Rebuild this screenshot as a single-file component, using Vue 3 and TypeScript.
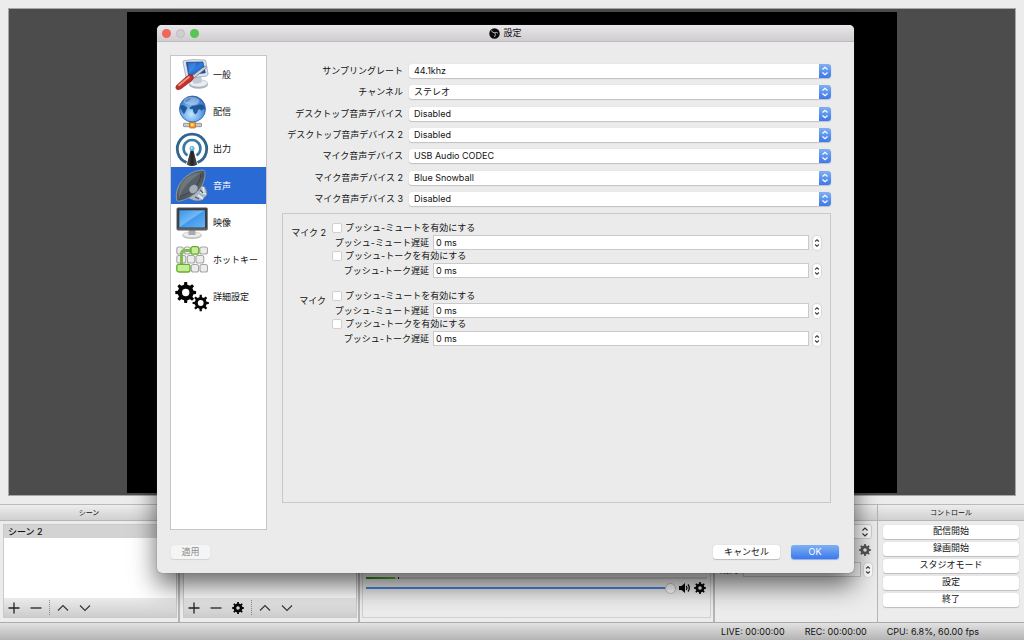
<script setup lang="ts">
import { ref } from 'vue'

function gear(cx: number, cy: number, outer: number, inner: number, hole: number): string {
  const teeth = 8
  const step = (Math.PI * 2) / teeth
  const at = (r: number, a: number) =>
    `${(cx + r * Math.cos(a)).toFixed(2)} ${(cy + r * Math.sin(a)).toFixed(2)}`
  const points: string[] = []
  for (let i = 0; i < teeth; i++) {
    const a = i * step
    points.push(
      at(inner, a - step * 0.27),
      at(outer, a - step * 0.17),
      at(outer, a + step * 0.17),
      at(inner, a + step * 0.27),
    )
  }
  return `M${points.join('L')}Z M${cx - hole} ${cy}a${hole} ${hole} 0 1 0 ${hole * 2} 0a${hole} ${hole} 0 1 0 ${-hole * 2} 0Z`
}

const smallGear = gear(6, 6, 6, 4.5, 1.8)

const sections = [
  { id: 'general', label: '一般' },
  { id: 'stream', label: '配信' },
  { id: 'output', label: '出力' },
  { id: 'audio', label: '音声' },
  { id: 'video', label: '映像' },
  { id: 'hotkeys', label: 'ホットキー' },
  { id: 'advanced', label: '詳細設定' },
]
const active = ref('audio')

const devices = [
  { id: 'rate', label: 'サンプリングレート', value: '44.1khz' },
  { id: 'channels', label: 'チャンネル', value: 'ステレオ' },
  { id: 'desktop1', label: 'デスクトップ音声デバイス', value: 'Disabled' },
  { id: 'desktop2', label: 'デスクトップ音声デバイス 2', value: 'Disabled' },
  { id: 'mic1', label: 'マイク音声デバイス', value: 'USB Audio CODEC' },
  { id: 'mic2', label: 'マイク音声デバイス 2', value: 'Blue Snowball' },
  { id: 'mic3', label: 'マイク音声デバイス 3', value: 'Disabled' },
]

const mics = ref([
  { id: 'm2', name: 'マイク 2', mute: false, muteDelay: '0 ms', talk: false, talkDelay: '0 ms' },
  { id: 'm1', name: 'マイク', mute: false, muteDelay: '0 ms', talk: false, talkDelay: '0 ms' },
])

const controls = ['配信開始', '録画開始', 'スタジオモード', '設定', '終了']
const volume = ref(100)
</script>

<template>
  <div class="app">
    <main class="preview"><div class="canvas"></div></main>

    <div class="docks">
      <section class="dock">
        <h2>シーン</h2>
        <div class="list">
          <div class="scene">シーン 2</div>
          <div class="tools">
            <button aria-label="追加"><svg viewBox="0 0 12 12"><path d="M6 .5v11M.5 6h11" /></svg></button>
            <button aria-label="削除"><svg viewBox="0 0 12 12"><path d="M.5 6h11" /></svg></button>
            <i class="split"></i>
            <button aria-label="上へ"><svg viewBox="0 0 12 12"><path class="thin" d="M1 8.5l5-5 5 5" /></svg></button>
            <button aria-label="下へ"><svg viewBox="0 0 12 12"><path class="thin" d="M1 3.5l5 5 5-5" /></svg></button>
          </div>
        </div>
      </section>

      <section class="dock">
        <h2></h2>
        <div class="list">
          <div class="tools">
            <button aria-label="追加"><svg viewBox="0 0 12 12"><path d="M6 .5v11M.5 6h11" /></svg></button>
            <button aria-label="削除"><svg viewBox="0 0 12 12"><path d="M.5 6h11" /></svg></button>
            <button aria-label="設定"><svg viewBox="0 0 12 12"><path class="solid" :d="smallGear" /></svg></button>
            <i class="split"></i>
            <button aria-label="上へ"><svg viewBox="0 0 12 12"><path class="thin" d="M1 8.5l5-5 5 5" /></svg></button>
            <button aria-label="下へ"><svg viewBox="0 0 12 12"><path class="thin" d="M1 3.5l5 5 5-5" /></svg></button>
          </div>
        </div>
      </section>

      <section class="dock">
        <h2></h2>
        <div class="mixer">
          <div class="meter"><i class="level"></i><i class="peak"></i></div>
          <div class="volume">
            <input v-model="volume" type="range" min="0" max="100" aria-label="音量" />
            <button aria-label="ミュート">
              <svg viewBox="0 0 12 12">
                <path class="solid" d="M0 4h2.5L6 1v10L2.500 8H0z" />
                <path class="wave" d="M7.300 4q1.400 2 0 4M9 2.500q2.600 3.500 0 7" />
              </svg>
            </button>
            <button aria-label="音声設定"><svg viewBox="0 0 12 12"><path class="solid" :d="smallGear" /></svg></button>
          </div>
        </div>
      </section>

      <section class="dock">
        <h2></h2>
        <div class="transition">
          <button class="combo" aria-label="切り替え">
            <svg viewBox="0 0 8 12"><path d="M1.500 4.500L4 2l2.500 2.500M1.500 7.500L4 10l2.500-2.500" /></svg>
          </button>
          <button class="config" aria-label="切り替え設定"><svg viewBox="0 0 12 12"><path class="solid" :d="smallGear" /></svg></button>
          <div class="duration">
            <label for="duration">期間</label>
            <input id="duration" type="text" />
            <button class="spin" aria-label="期間の増減">
              <svg viewBox="0 0 8 14"><path d="M2.200 5.500L4 3.700l1.800 1.800M2.200 8.500L4 10.300l1.800-1.800" /></svg>
            </button>
          </div>
        </div>
      </section>

      <section class="dock">
        <h2>コントロール</h2>
        <div class="controls">
          <button v-for="c in controls" :key="c" class="push">{{ c }}</button>
        </div>
      </section>
    </div>

    <footer class="status">
      <span>LIVE: 00:00:00</span>
      <span>REC: 00:00:00</span>
      <span>CPU: 6.8%, 60.00 fps</span>
    </footer>

    <div class="dialog" role="dialog" aria-labelledby="dialog-title">
      <header class="titlebar">
        <div class="lights">
          <button class="close" aria-label="閉じる"></button>
          <button class="mini" aria-label="しまう"></button>
          <button class="full" aria-label="拡大"></button>
        </div>
        <svg class="logo" viewBox="0 0 12 12">
          <circle cx="6" cy="6" r="5.700" fill="#0c0c0c" />
          <path d="M2.800 2.600Q3.200 5.200 6 5.200Q8.200 4.200 9.800 5.600M6.300 5.200Q7.800 7.200 6 9.800" fill="none" stroke="#d5d5d5" stroke-width=".9" />
        </svg>
        <h1 id="dialog-title">設定</h1>
      </header>

      <div class="body">
        <nav class="sidebar">
          <button
            v-for="s in sections"
            :key="s.id"
            :class="{ active: active === s.id }"
            @click="active = s.id"
          >
            <svg v-if="s.id === 'general'" viewBox="0 0 34 34">
              <defs>
                <linearGradient id="crt" x1="0" y1="0" x2="1" y2="1">
                  <stop offset="0" stop-color="#0b3fa5" /><stop offset=".5" stop-color="#2f7de0" /><stop offset="1" stop-color="#0c3c9c" />
                </linearGradient>
              </defs>
              <ellipse cx="23.500" cy="26.500" rx="9.500" ry="4.300" fill="#aab3bf" />
              <ellipse cx="23.500" cy="25.300" rx="9" ry="3.800" fill="#e9edf3" stroke="#9ba6b5" stroke-width=".5" />
              <path d="M17 19l9-2 1 7q-5 3-9 1z" fill="#c3cad6" />
              <path d="M9 2.500Q18 1 29.500 2q1 0 1.300 1L33 16q0 1.500-1.500 2L12.500 20.500q-1.200 0-1.500-1L8 4q0-1.300 1-1.500z" fill="#dfe4ec" stroke="#8e9bb0" stroke-width=".7" />
              <path d="M11.300 4.300L28 3.900 30.300 14.800 13.500 17z" fill="url(#crt)" stroke="#14376f" stroke-width=".6" />
              <path d="M12.500 5l9-.3Q20 11 14.500 14z" fill="#6aa7f0" opacity=".4" />
              <path d="M16.500 18.500L26 11l4.500-3 1.200 1.400-4 3.600L18.500 20.500z" fill="#ccd3dc" stroke="#66707e" stroke-width=".7" />
              <path d="M1.500 27.500L11.500 18.500q3-2.800 6-1.300 2.200 2.500-.5 5.200L6 30.800q-3 1.700-4.800 0-.8-1.500.3-3.300z" fill="#c4302b" stroke="#7c1714" stroke-width=".6" />
              <path d="M4 27.300L14 19" stroke="#f29488" stroke-width="1.800" stroke-linecap="round" />
            </svg>
            <svg v-else-if="s.id === 'stream'" viewBox="0 0 34 34">
              <defs>
                <radialGradient id="sea" cx=".45" cy=".7" r=".75">
                  <stop offset="0" stop-color="#c5e6ff" /><stop offset=".5" stop-color="#65a7e8" /><stop offset="1" stop-color="#2461b6" />
                </radialGradient>
              </defs>
              <path d="M17.500 26v4" stroke="#8c8c8c" stroke-width="3" />
              <rect x="8.500" y="28.300" width="18" height="3.400" rx=".6" fill="#c8c8c8" stroke="#777" stroke-width=".7" />
              <rect x="14.500" y="27" width="6" height="6" rx="1" fill="#f39b2d" stroke="#b8640c" stroke-width=".7" />
              <rect x="16" y="28.500" width="2.500" height="2.500" fill="#ffdc98" />
              <g transform="translate(.5 0)">
                <circle cx="17" cy="14" r="13" fill="url(#sea)" stroke="#2860ae" stroke-width=".8" />
                <path d="M4.700 11q2-1.500 3.800-.6 2.500 1 3.500 2.600-1 1-1.500 2.500-.8 2.200-2 3.500-1.300-.8-1.700-2.500Q6 14 4.600 13.500zM14 12.500l3-1.700 4-.5 3.500-1 3.400.7q1.800 2.500 1.500 4.500l-2-.5-1.200 2-1.800-2-2 1-.5 2.500-2.300 2-1.800-2.500-.4-2.700-3-.4zM9 5.500l4-2.500 3 .5-2 2-3.500 2z" fill="#194e91" opacity=".9" />
                <ellipse cx="16" cy="6" rx="8" ry="4" fill="#fff" opacity=".35" />
              </g>
            </svg>
            <svg v-else-if="s.id === 'output'" viewBox="0 0 34 34">
              <defs>
                <linearGradient id="cone" x1="0" y1="0" x2="1" y2="0">
                  <stop offset="0" stop-color="#606060" /><stop offset=".5" stop-color="#222" /><stop offset="1" stop-color="#555" />
                </linearGradient>
              </defs>
              <path d="M11.500 30.500A14.700 14.700 0 1 1 22.500 30.500" fill="none" stroke="#2f6590" stroke-width="2.800" />
              <path d="M12.500 23.500A8.400 8.400 0 1 1 21.500 23.500" fill="none" stroke="#3c789f" stroke-width="2.600" />
              <path d="M16 17h2l4.300 15.500q-5.300 3-10.600 0z" fill="url(#cone)" />
              <circle cx="17" cy="16.500" r="2.500" fill="#52b8ec" />
              <circle cx="16.700" cy="16" r="1" fill="#b9ebff" />
            </svg>
            <svg v-else-if="s.id === 'audio'" viewBox="0 0 34 34">
              <defs>
                <linearGradient id="horn" x1="0" y1="0" x2="1" y2="1">
                  <stop offset="0" stop-color="#7b848b" /><stop offset=".55" stop-color="#4a5258" /><stop offset="1" stop-color="#858d93" />
                </linearGradient>
              </defs>
              <path d="M22 15l8 3q2.500 4 2 8l-5 5q-4 1.500-8 .5l-5-2z" fill="#a9b8c4" stroke="#667685" stroke-width=".6" />
              <path d="M25 23l6 2M23 26l5 4M28 18l1 5" stroke="#e6edf3" stroke-width="1.700" />
              <path d="M25 21l3 3M20 28l4 2" stroke="#4d5b68" stroke-width="1.200" />
              <path d="M1.500 31Q0 21 6.500 12 15 2 27 1q2.800.1 3 2Q30.500 13 24 21 16 30 4 32.200 2 32.500 1.500 31z" fill="url(#horn)" stroke="#98a4ad" stroke-width=".8" />
              <path d="M3.500 29Q3.500 20 10.500 12q7-8 16.500-9.300Q26 13 20 19.500 13 27 3.500 29z" fill="#565f66" />
              <path d="M4 28.500Q8 16 26.500 3.300 13 5 7.500 14 3.500 21 4 28.500z" fill="#7d878e" opacity=".6" />
              <path d="M26 4.500q-1 9.500-7 15-6 6-14 8" fill="none" stroke="#394147" stroke-width="1" />
              <ellipse cx="18.500" cy="20" rx="4.600" ry="3.800" fill="#a3adb5" transform="rotate(-45 18.500 20)" />
            </svg>
            <svg v-else-if="s.id === 'video'" viewBox="0 0 34 34">
              <defs>
                <linearGradient id="lcd" x1="0" y1="0" x2="1" y2="1">
                  <stop offset="0" stop-color="#3b93e8" /><stop offset=".48" stop-color="#71b9f5" /><stop offset=".5" stop-color="#4298ec" /><stop offset="1" stop-color="#66b2f3" />
                </linearGradient>
              </defs>
              <ellipse cx="17" cy="29.500" rx="9.800" ry="3.500" fill="#bcbcbc" />
              <ellipse cx="17" cy="28.700" rx="9.300" ry="3" fill="#ececec" stroke="#bbb" stroke-width=".5" />
              <path d="M14 24h6l.8 5h-7.600z" fill="#aaa" />
              <rect x="1.800" y="1.800" width="30.700" height="22.400" rx="1.200" fill="#3a3c40" stroke="#777" stroke-width=".6" />
              <rect x="4.300" y="4.300" width="25.700" height="17.200" fill="url(#lcd)" />
              <path d="M2.300 23h29.700" stroke="#888" stroke-width=".8" />
            </svg>
            <svg v-else-if="s.id === 'hotkeys'" viewBox="0 0 34 34">
              <g fill="#ececec" stroke="#a5a5a5" stroke-width="1.100">
                <rect x="1.800" y="4" width="6.500" height="7" rx="2" /><rect x="9.300" y="4" width="6" height="7" rx="2" />
                <rect x="24.800" y="4" width="7.700" height="7" rx="2" /><rect x="1.800" y="12.500" width="9" height="7.500" rx="2" />
                <rect x="12.300" y="12.500" width="7.500" height="7.500" rx="2" /><rect x="21" y="12.500" width="7.800" height="7.500" rx="2" />
                <rect x="16.300" y="21.500" width="7.300" height="7.500" rx="2" /><rect x="25" y="21.500" width="7.500" height="7.500" rx="2" />
              </g>
              <path d="M16 7.500H10Q6.500 7.500 6.500 11v11" fill="none" stroke="#84bb52" stroke-width="3" />
              <g fill="#c7ec97" stroke="#65ad2d" stroke-width="1.300">
                <rect x="16" y="3.700" width="7.800" height="7.500" rx="2" /><rect x="1.800" y="21.300" width="13.200" height="7.700" rx="2" />
              </g>
            </svg>
            <svg v-else viewBox="0 0 34 34">
              <path :d="gear(10.7, 12.5, 10.5, 8, 3.7)" fill="#050505" fill-rule="evenodd" />
              <path :d="gear(25.7, 23, 8.2, 6, 2.900)" fill="#050505" fill-rule="evenodd" />
            </svg>
            <span>{{ s.label }}</span>
          </button>
        </nav>

        <div class="content">
          <div class="devices">
            <div v-for="d in devices" :key="d.id" class="device">
              <label :for="d.id">{{ d.label }}</label>
              <div class="picker">
                <select :id="d.id"><option>{{ d.value }}</option></select>
                <svg viewBox="0 0 12 14"><path d="M3.500 5.500L6 3.200l2.500 2.300M3.500 8.500L6 10.800l2.500-2.300" /></svg>
              </div>
            </div>
          </div>

          <div class="mics">
            <fieldset v-for="m in mics" :key="m.id">
              <div class="mic-name">{{ m.name }}</div>
              <div class="mic-rows">
                <label class="check"><input v-model="m.mute" type="checkbox" />プッシュ-ミュートを有効にする</label>
                <div class="delay">
                  <label :for="m.id + '-mute'">プッシュ-ミュート遅延</label>
                  <input :id="m.id + '-mute'" v-model="m.muteDelay" type="text" />
                  <button class="spin" aria-label="増減"><svg viewBox="0 0 8 14"><path d="M2.200 5.500L4 3.700l1.800 1.800M2.200 8.500L4 10.300l1.800-1.800" /></svg></button>
                </div>
                <label class="check"><input v-model="m.talk" type="checkbox" />プッシュ-トークを有効にする</label>
                <div class="delay">
                  <label :for="m.id + '-talk'">プッシュ-トーク遅延</label>
                  <input :id="m.id + '-talk'" v-model="m.talkDelay" type="text" />
                  <button class="spin" aria-label="増減"><svg viewBox="0 0 8 14"><path d="M2.200 5.500L4 3.700l1.800 1.800M2.200 8.500L4 10.300l1.800-1.800" /></svg></button>
                </div>
              </div>
            </fieldset>
          </div>
        </div>
      </div>

      <footer class="actions">
        <button class="push apply" disabled>適用</button>
        <button class="push cancel">キャンセル</button>
        <button class="push ok">OK</button>
      </footer>
    </div>
  </div>
</template>

<style>
body { background: #ececec; }
</style>

<style scoped>
* { box-sizing: border-box; }
.app {
  position: relative;
  display: flex;
  flex-direction: column;
  min-height: 100vh;
  overflow: hidden;
  background: #ececec;
  color: #111;
  font-family: Inter, "Noto Sans CJK JP", sans-serif;
  font-size: 9px;
  line-height: 14px;
}
button, input, select {
  margin: 0;
  padding: 0;
  border: 0;
  background: none;
  color: inherit;
  font: inherit;
  appearance: none;
}
svg { display: block; overflow: visible; }
h1, h2 { margin: 0; font-weight: 400; }

.preview {
  flex: 1;
  display: flex;
  justify-content: center;
  align-items: center;
  margin: 8px;
  border: 1px solid #a6a6a6;
  background: #4c4c4c;
}
.canvas { height: calc(100vh - 159px); aspect-ratio: 16 / 10; background: #000; }

.docks {
  display: grid;
  grid-template-columns: 180fr 180fr 355fr 163fr 146fr;
  height: 118px;
}
.dock {
  display: flex;
  flex-direction: column;
  min-width: 0;
  border-right: 2px solid #b5b5b5;
}
.dock:nth-child(4) { border-right-width: 1px; }
.dock:last-child { border-right: 0; }
.dock h2 {
  height: 17px;
  border-top: 1px solid #bababa;
  border-bottom: 1px solid #b5b5b5;
  background: linear-gradient(#ededed, #d0d0d0);
  font-size: 7px;
  line-height: 16px;
  text-align: center;
}
.list {
  flex: 1;
  display: flex;
  flex-direction: column;
  margin: 3px 1px 4px 3px;
  border: 1px solid #cacaca;
  background: #fff;
}
.scene { padding-left: 4px; background: #d3d3d3; font-weight: 500; line-height: 13px; }
.tools {
  display: flex;
  align-items: center;
  gap: 10px;
  height: 19px;
  margin-top: auto;
  padding-left: 4px;
  background: linear-gradient(#ebebeb, #cdcdcd);
}
.tools button, .volume button, .config { flex: none; width: 12px; height: 12px; }
.tools path, .volume path, .config path { fill: none; stroke: #222; stroke-width: 1.3; }
.tools .thin { stroke: #333; stroke-width: 1.1; }
.tools .solid, .volume .solid, .config .solid { fill: #080808; fill-rule: evenodd; stroke: none; }
.split { width: 1px; height: 15px; margin: 0 -3px; border-left: 1px dotted #888; }

.mixer {
  flex: 1;
  display: flex;
  flex-direction: column;
  justify-content: flex-end;
  margin: 3px 2px 4px 2px;
  padding: 0 3px 23px;
  border: 1px solid #cfcfcf;
}
.meter { display: flex; height: 2px; margin-bottom: 3px; background: #ccc; }
.level { width: 29px; background: linear-gradient(90deg, #2f7a1c, #53b234); }
.peak { width: 1px; margin-left: 3px; background: #222; }
.volume { display: flex; align-items: center; gap: 3px; height: 12px; padding-right: 1px; }
.volume input {
  flex: 1;
  min-width: 0;
  height: 12px;
  background: linear-gradient(#4a86e0, #4a86e0) center / 100% 2px no-repeat;
}
.volume input::-webkit-slider-thumb {
  appearance: none;
  width: 11px;
  height: 11px;
  border: 1px solid #c4c4c4;
  border-radius: 50%;
  background: #fff;
}
.volume .wave { stroke: #080808; }

.transition { display: flex; flex-direction: column; align-items: flex-end; padding: 3px 5px; }
.combo {
  display: flex;
  justify-content: flex-end;
  width: 100%;
  height: 15px;
  padding: 1px 2px;
  border: 1px solid #cecece;
  border-radius: 3px;
  background: #fafafa;
}
.combo svg { width: 8px; height: 12px; }
.combo path, .spin path { fill: none; stroke: #333; stroke-width: 1.1; }
.config { margin: 5px 1px 6px; opacity: .65; }
.duration { display: flex; align-items: center; width: 100%; }
.duration input { flex: 1; min-width: 0; height: 15px; margin: 0 3px 0 5px; border: 1px solid #c4c4c4; background: #f2f2f2; }
.spin {
  flex: none;
  width: 8px;
  height: 14px;
  border-radius: 4px;
  background: #fff;
  box-shadow: 0 0 1px 1px #d8d8d8;
}
.spin svg { width: 8px; height: 14px; }

.controls { display: grid; gap: 3px; padding: 4px 5px 0; }
.push {
  height: 14px;
  border-radius: 3px;
  background: #fff;
  box-shadow: 0 1px 1px #bcbcbc, 0 0 1px #c4c4c4;
  line-height: 13px;
  text-align: center;
}
.controls .push { padding-bottom: 2px; line-height: 12px; }

.status {
  display: flex;
  justify-content: flex-end;
  gap: 20px;
  height: 18px;
  padding-right: 45px;
  border-top: 1px solid #aaa;
  background: linear-gradient(#e2e2e2, #b4b4b4);
  line-height: 18px;
}

.dialog {
  position: absolute;
  inset: 25px 170px 67px 157px;
  display: flex;
  flex-direction: column;
  border-radius: 5px;
  background: #ebebeb;
  box-shadow: 0 0 1px #555, 0 12px 26px rgba(0, 0, 0, .6);
}
.titlebar {
  position: relative;
  display: flex;
  justify-content: center;
  align-items: center;
  gap: 3px;
  height: 17px;
  border-bottom: 1px solid #bdbbbd;
  border-radius: 5px 5px 0 0;
  background: linear-gradient(#eae7ea, #d0cdd0);
}
.lights { position: absolute; left: 5px; top: 4px; display: flex; gap: 5px; }
.lights button { width: 9px; height: 9px; border-radius: 50%; }
.close { background: #f0665c; }
.mini { border: 1px solid #bdbdbd; background: #cfcfcf; }
.full { background: #5ac552; }
.logo { width: 11px; height: 11px; }
.titlebar h1 { font-size: 9px; line-height: 16px; }

.body { flex: 1; display: flex; gap: 15px; min-height: 0; padding: 13px 23px 0 13px; }
.sidebar { width: 97px; border: 1px solid #c6c6c6; background: #fff; }
.sidebar button {
  display: flex;
  align-items: center;
  gap: 4px;
  width: 100%;
  height: 37px;
  padding-left: 4px;
  text-align: left;
}
.sidebar svg { flex: none; width: 34px; height: 34px; }
.sidebar .active { background: #2a6ad5; color: #fff; }

.content { flex: 1; display: flex; flex-direction: column; min-width: 0; padding-top: 5px; }
.devices { display: grid; grid-template-rows: repeat(7, 1fr); height: 150px; }
.device { display: grid; grid-template-columns: 121px 1fr; gap: 6px; align-items: center; }
.device > label { text-align: right; white-space: nowrap; }
.picker {
  display: flex;
  height: 14px;
  border-radius: 3px;
  background: #fff;
  box-shadow: 0 1px 1px #c0c0c0, 0 0 1px #ccc;
}
.picker select { flex: 1; min-width: 0; padding-left: 5px; line-height: 14px; }
.picker svg { width: 12px; height: 14px; border-radius: 0 3px 3px 0; background: linear-gradient(#7fb0f2, #3b78ec); }
.picker path { fill: none; stroke: #fff; stroke-width: 1.2; }

.mics { flex: 1; margin: 3px 0 27px; padding: 8px 9px 0 0; border: 1px solid #c8c8c8; }
fieldset { display: flex; gap: 6px; min-width: 0; margin: 0 0 12px; padding: 0; border: 0; }
.mic-name { width: 43px; padding-top: 4px; text-align: right; }
.mic-rows { flex: 1; min-width: 0; }
.check { display: flex; align-items: flex-start; gap: 3px; height: 13px; line-height: 12px; }
.check input { width: 10px; height: 10px; margin-top: 1px; border: 1px solid #d0d0d0; border-radius: 2px; background: #fff; }
.delay { display: flex; align-items: center; height: 15px; }
.delay label { width: 97px; text-align: right; white-space: nowrap; }
.delay input {
  flex: 1;
  min-width: 0;
  height: 15px;
  margin: 0 4px;
  padding-left: 2px;
  border: 1px solid #cacaca;
  background: #fff;
  line-height: 13px;
}

.actions { display: flex; align-items: center; height: 43px; padding: 0 15px 0 14px; }
.apply { width: 39px; margin-right: auto; background: #f5f5f5; color: #8c8c8c; box-shadow: 0 1px 1px #d2d2d2, 0 0 1px #d2d2d2; }
.cancel { width: 67px; margin-right: 11px; }
.ok { width: 48px; background: linear-gradient(#7fb0f2, #3d79ed); box-shadow: 0 1px 1px #8daee8; color: #fff; }
</style>
